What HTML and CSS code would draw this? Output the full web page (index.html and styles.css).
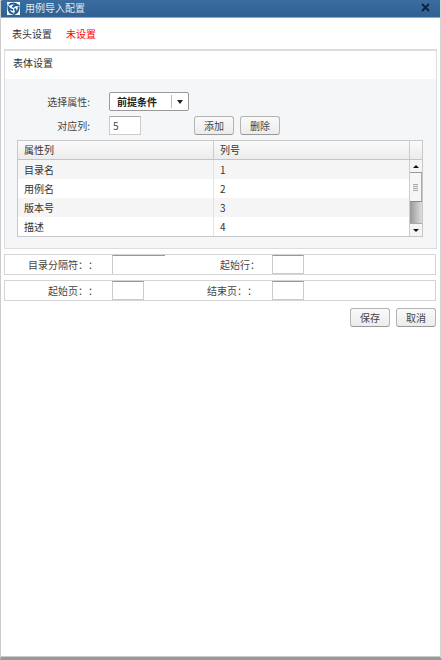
FILE: index.html
```html
<!DOCTYPE html>
<html lang="zh-CN">
<head>
  <meta charset="utf-8">
  <title>用例导入配置</title>
  <link rel="stylesheet" href="styles.css">
</head>
<body>
  <div class="dialog">
    <div class="title-bar">
      <svg class="logo" width="13" height="13" viewBox="0 0 13 13">
        <rect width="13" height="13" fill="#fff"/>
        <g fill="none" stroke="#1f5c98" stroke-width="2">
          <path d="M2 3C4 1 8 1 10.500 3C8.500 3 6.500 3.500 5.500 5.500"/>
          <path d="M11.500 4.500C12 7.500 10.500 10.500 8 11.500C9 10 9 8 7.500 6.500"/>
          <path d="M6.500 11.800C3.500 11.500 1.500 9 1.500 5.500C2.500 7 4 8 6 8"/>
        </g>
      </svg>
      <span class="title-text">用例导入配置</span>
      <svg class="close" width="9" height="9" viewBox="0 0 9 9">
        <path d="M1 1L8 8M8 1L1 8" stroke="#10233a" stroke-width="2"/>
      </svg>
    </div>

    <div class="content">
      <div class="head-row">
        <span>表头设置</span>
        <span class="not-set">未设置</span>
      </div>

      <div class="panel">
        <div class="panel-title">表体设置</div>
        <div class="panel-body">
          <div class="field-row">
            <label class="field-label">选择属性:</label>
            <div class="select">
              <span class="select-value">前提条件</span>
              <span class="select-arrow"></span>
            </div>
          </div>
          <div class="field-row">
            <label class="field-label">对应列:</label>
            <input class="text-input small" value="5">
            <button class="btn first">添加</button>
            <button class="btn">删除</button>
          </div>

          <div class="grid">
            <div class="grid-head">
              <div class="col-name">属性列</div>
              <div class="col-num">列号</div>
              <div class="col-corner"></div>
            </div>
            <div class="grid-main">
              <div class="grid-rows">
                <div class="grid-row alt"><div class="col-name">目录名</div><div class="col-num">1</div></div>
                <div class="grid-row"><div class="col-name">用例名</div><div class="col-num">2</div></div>
                <div class="grid-row alt"><div class="col-name">版本号</div><div class="col-num">3</div></div>
                <div class="grid-row"><div class="col-name">描述</div><div class="col-num">4</div></div>
              </div>
              <div class="scrollbar">
                <div class="scroll-btn"><span class="arrow-up"></span></div>
                <div class="scroll-thumb"><span class="grip"></span></div>
                <div class="scroll-track"></div>
                <div class="scroll-btn bottom"><span class="arrow-down"></span></div>
              </div>
            </div>
          </div>
        </div>
      </div>

      <div class="form-row">
        <label class="form-label">目录分隔符：：</label>
        <input class="form-input wide">
        <label class="form-label second">起始行：</label>
        <input class="form-input">
      </div>
      <div class="form-row">
        <label class="form-label">起始页：：</label>
        <input class="form-input">
        <label class="form-label gap">结束页：：</label>
        <input class="form-input">
      </div>

      <div class="actions">
        <button class="btn">保存</button>
        <button class="btn">取消</button>
      </div>
    </div>
  </div>
</body>
</html>
```

FILE: styles.css
```css
* {
  margin: 0;
  padding: 0;
  box-sizing: border-box;
}

body {
  font-family: "Noto Sans CJK SC", "Liberation Sans", sans-serif;
  font-size: 10px;
  color: #333;
  background: #fff;
}

.dialog {
  width: 442px;
  height: 660px;
  display: flex;
  flex-direction: column;
  border-left: 1px solid #ccc;
  border-right: 2px solid #d4d4d4;
  border-bottom: 3px solid #999;
  box-shadow: inset 0 -1px 0 #ccc;
  overflow: hidden;
}

.title-bar {
  height: 18px;
  margin: 0 -2px 0 -1px;
  padding: 0 12px 2px 7px;
  display: flex;
  align-items: center;
  background: linear-gradient(#3a6c9f, #2f6195);
  border-bottom: 1px solid #8fa9c4;
  border-radius: 3px 3px 0 0;
  color: #dfe8f1;
}

.logo {
  margin: 2px 5px 0 0;
}

.title-text {
  flex: 1;
}

.content {
  flex: 1;
  padding: 0 3px;
}

.head-row {
  height: 31px;
  padding-left: 8px;
  display: flex;
  align-items: center;
  gap: 14px;
}

.not-set {
  color: #f00;
}

.panel {
  height: 200px;
  border: 1px solid #ddd;
  border-top-width: 2px;
  display: flex;
  flex-direction: column;
}

.panel-title {
  height: 28px;
  padding: 3px 0 0 8px;
  line-height: 18px;
}

.panel-body {
  flex: 1;
  padding: 13px 12px 0;
  background: #f5f6f8;
}

.field-row {
  display: flex;
  align-items: center;
  height: 19px;
  margin-bottom: 5px;
}

.field-label {
  width: 73px;
  margin-right: 19px;
  text-align: right;
  color: #444;
}

.select {
  width: 80px;
  height: 19px;
  display: flex;
  align-items: center;
  background: #fff;
  border: 1px solid #999;
  border-radius: 2px;
}

.select-value {
  width: 62px;
  padding-left: 7px;
  font-weight: bold;
  color: #222;
  border-right: 1px solid #bbb;
  line-height: 13px;
}

.select-arrow {
  margin-left: 5px;
  border: 3px solid transparent;
  border-top: 4px solid #222;
  border-bottom: 0;
}

.text-input {
  height: 19px;
  padding-left: 3px;
  font-family: inherit;
  font-size: 10px;
  color: #444;
  background: #fff;
  border: 1px solid #ccc;
  border-top-color: #aaa;
}

.small {
  width: 32px;
}

.btn {
  width: 40px;
  height: 19px;
  font-family: inherit;
  font-size: 10px;
  color: #444;
  background: linear-gradient(#fafafa, #ececec);
  border: 1px solid #b4b4b4;
  border-bottom-color: #999;
  border-radius: 3px;
}

.first {
  margin: 0 6px 0 53px;
}

.grid {
  width: 406px;
  margin-top: 0;
  border: 1px solid #c8c8c8;
  background: #fff;
}

.grid-head {
  display: flex;
  height: 19px;
  line-height: 18px;
  background: linear-gradient(#fafafa, #ececee);
  border-bottom: 1px solid #c4c4c4;
}

.col-name {
  width: 196px;
  padding-left: 6px;
  border-right: 1px solid #ccc;
}

.col-num {
  width: 195px;
  padding-left: 6px;
}

.col-corner {
  width: 13px;
  border-left: 1px solid #ccc;
}

.grid-main {
  display: flex;
}

.grid-rows {
  width: 391px;
}

.grid-row {
  display: flex;
  height: 19px;
  line-height: 19px;
}

.alt {
  background: #f5f5f5;
}

.grid-rows .col-name {
  border-right-color: #e4e4e4;
}

.scrollbar {
  width: 13px;
  display: flex;
  flex-direction: column;
  border-left: 1px solid #ccc;
}

.scroll-btn {
  height: 13px;
  display: flex;
  align-items: center;
  justify-content: center;
  background: #f4f4f4;
  border-bottom: 1px solid #999;
}

.bottom {
  border-top: 1px solid #aaa;
  border-bottom: 0;
}

.arrow-up {
  border: 3px solid transparent;
  border-top: 0;
  border-bottom: 3px solid #111;
}

.arrow-down {
  border: 3px solid transparent;
  border-bottom: 0;
  border-top: 3px solid #111;
}

.scroll-thumb {
  height: 29px;
  display: flex;
  align-items: center;
  justify-content: center;
  background: #f6f6f6;
  border-bottom: 1px solid #888;
  border-right: 1px solid #aaa;
}

.grip {
  width: 5px;
  height: 7px;
  background: repeating-linear-gradient(#aaa 0 1px, #eee 1px 2px);
}

.scroll-track {
  flex: 1;
  background: linear-gradient(90deg, #999, #ddd);
}

.form-row {
  width: 432px;
  height: 21px;
  margin-top: 5px;
  display: flex;
  align-items: stretch;
  border: 1px solid #d4d4d4;
}

.form-label {
  width: 107px;
  padding-right: 14px;
  text-align: right;
  line-height: 19px;
  color: #444;
  white-space: nowrap;
  text-spacing-trim: space-all;
}

.second {
  width: 107px;
  padding-right: 12px;
}

.gap {
  width: 128px;
  padding-right: 15px;
}

.form-input {
  width: 32px;
  height: 19px;
  background: #fff;
  border: 1px solid #ccc;
  border-top-color: #999;
}

.wide {
  width: 53px;
  border-right: 0;
  border-bottom: 0;
}

.actions {
  width: 432px;
  margin-top: 7px;
  display: flex;
  justify-content: flex-end;
  gap: 6px;
}
```
